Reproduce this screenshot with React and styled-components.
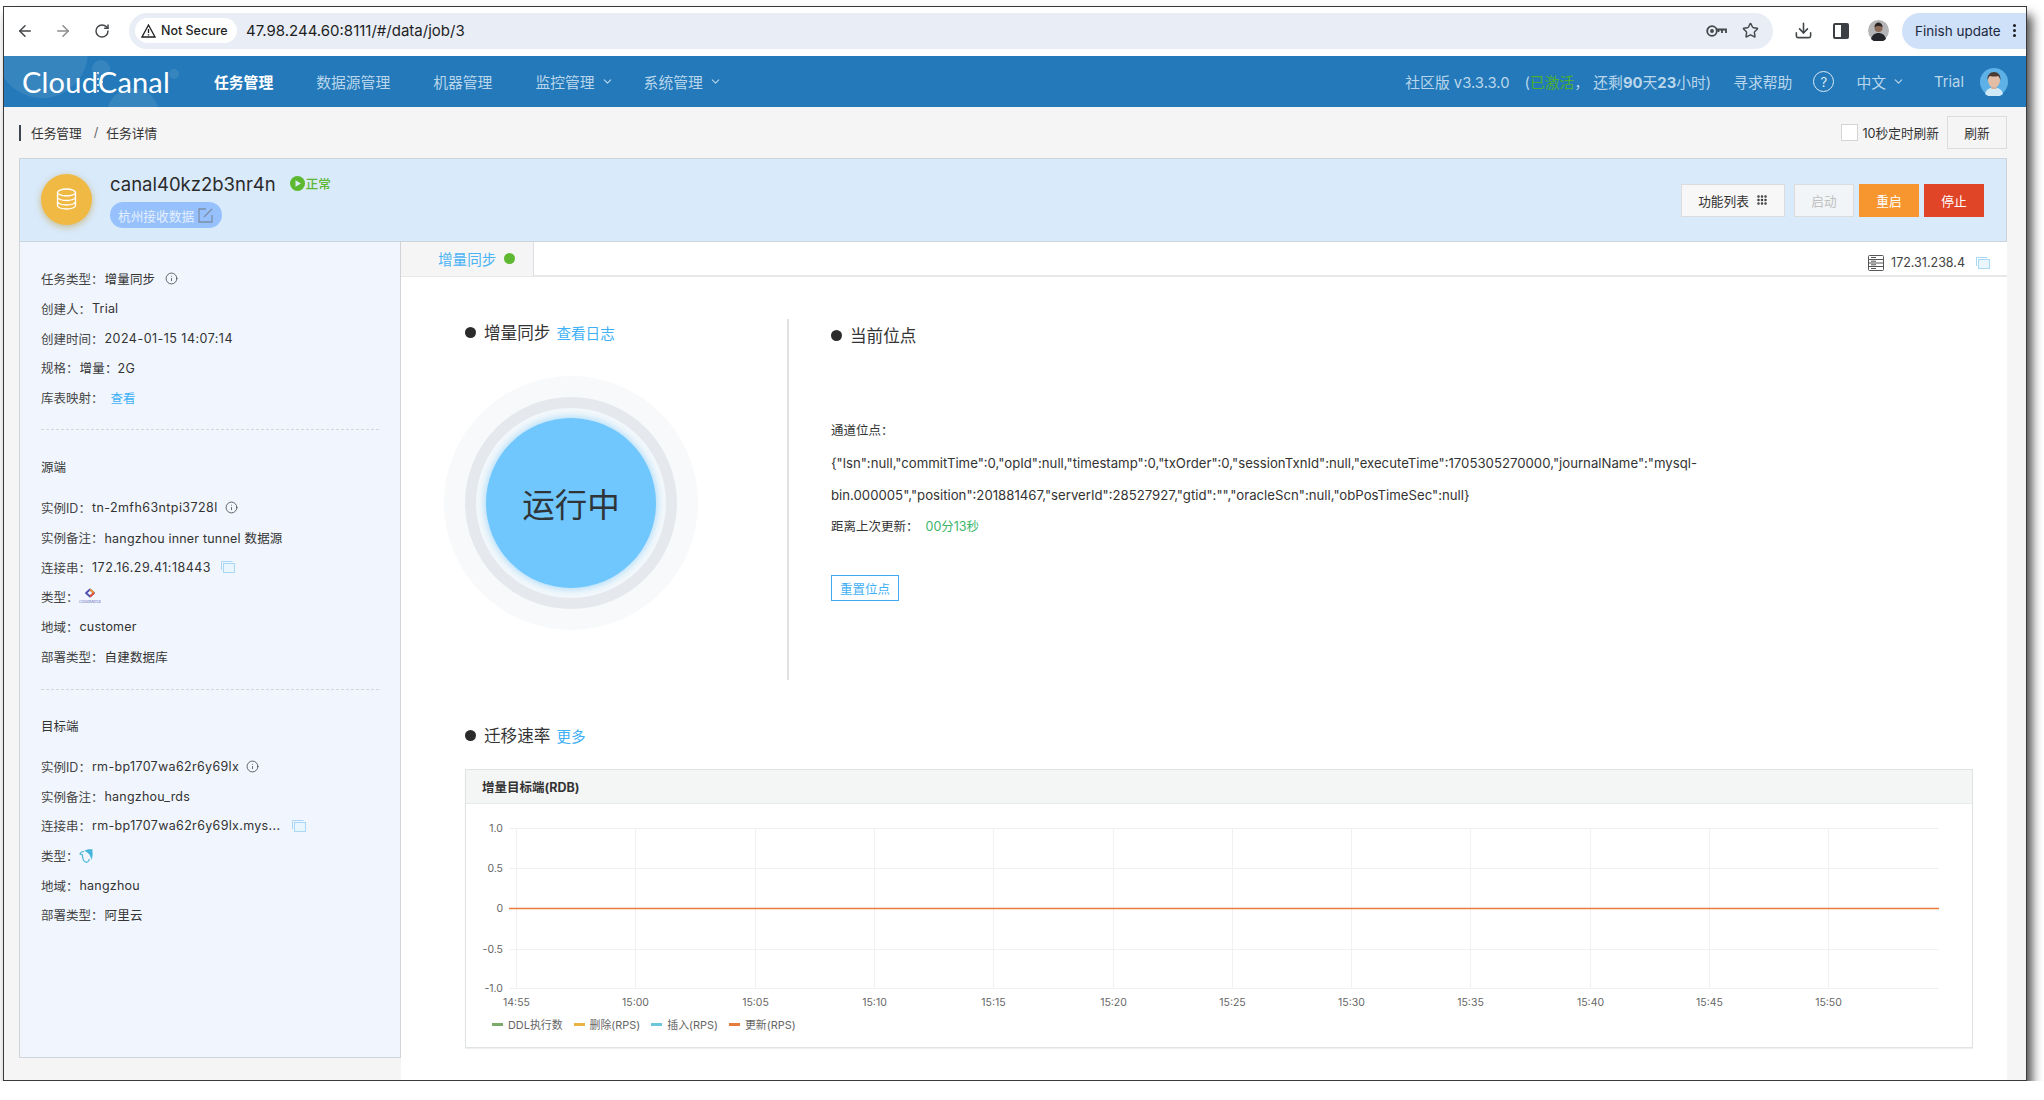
import React from 'react';
import styled, { createGlobalStyle } from 'styled-components';
import { ArrowLeft, ArrowRight, RotateCw, Star, Download, ChevronDown, Info, Grip } from 'lucide-react';

const FONT = 'Inter, "Noto Sans CJK SC", sans-serif';

const GlobalStyle = createGlobalStyle`
  html, body {
    margin: 0;
    padding: 0;
    background: #fff;
    font-family: ${FONT};
    color: #333;
  }
  * { box-sizing: border-box; }
`;

const Win = styled.div`
  margin: 6px 0 0 3px;
  width: 2024px;
  height: 1075px;
  border: 1px solid #3a3a3c;
  background: #f5f5f5;
  box-shadow: 5px 9px 10px rgba(0, 0, 0, 0.7);
  display: flex;
  flex-direction: column;
  overflow: hidden;
`;

/* browser toolbar */
const Toolbar = styled.div`
  height: 49px;
  flex: none;
  background: #fff;
  display: flex;
  align-items: center;
  padding-bottom: 2px;
  color: #45474a;
`;

const ToolIcon = styled.span`
  width: ${p => p.$w || 38}px;
  margin-left: ${p => p.$ml || 0}px;
  display: flex;
  justify-content: center;
  color: ${p => p.$color || '#44474a'};
`;

const Omnibox = styled.div`
  margin-left: 7px;
  width: 1645px;
  height: 36px;
  border-radius: 18px;
  background: #e8edf6;
  display: flex;
  align-items: center;
  padding: 0 6px;
`;

const SecurePill = styled.div`
  height: 25px;
  width: 102px;
  border-radius: 13px;
  background: #fff;
  display: flex;
  align-items: center;
  gap: 5px;
  padding-left: 6px;
  font-size: 12.5px;
  font-weight: 500;
  color: #1f1f1f;
  white-space: nowrap;
`;

const Url = styled.span`
  margin-left: 9px;
  font-size: 15px;
  color: #1f1f1f;
  flex: 1;
`;

const UpdatePill = styled.div`
  margin-left: 4px;
  width: 124px;
  height: 36px;
  border-radius: 18px 0 0 18px;
  background: #cfe0f9;
  display: flex;
  align-items: center;
  padding-left: 13px;
  font-size: 13.5px;
  color: #1b2a41;
  white-space: nowrap;
`;

const Kebab = styled.span`
  margin-left: 12px;
  width: 3px;
  height: 3px;
  border-radius: 50%;
  background: #1f1f1f;
  box-shadow: 0 -5px 0 #1f1f1f, 0 5px 0 #1f1f1f;
`;

/* product nav */
const Nav = styled.div`
  position: relative;
  height: 51px;
  flex: none;
  background: #2379b9;
  display: flex;
  align-items: center;
  color: #b9d6ec;
  font-size: 14.8px;
  white-space: nowrap;
`;

const LogoBubbles = styled.svg`
  position: absolute;
  left: 0;
  top: 0;
`;

const Logo = styled.div`
  position: relative;
  margin-left: 18px;
  width: 192px;
  font-family: Lato, sans-serif;
  font-size: 29px;
  font-weight: 400;
  letter-spacing: 0.2px;
  color: #fff;
`;

const NavItem = styled.span`
  display: inline-flex;
  align-items: center;
  gap: 6px;
  margin-right: ${p => p.$mr ?? 43}px;
  margin-left: ${p => p.$ml || 0}px;
  color: ${p => (p.$active ? '#fff' : '#b9d6ec')};
  font-weight: ${p => (p.$active ? 600 : 400)};
`;

const NavRight = styled.div`
  margin-left: auto;
  display: flex;
  align-items: center;
  padding-right: 18px;
`;

const Activated = styled.span`
  color: #4caf30;
`;

const Strong = styled.b`
  font-weight: 700;
`;

const HelpRing = styled.span`
  width: 21px;
  height: 21px;
  border: 1.5px solid #dcebf6;
  border-radius: 50%;
  display: flex;
  align-items: center;
  justify-content: center;
  font-size: 13px;
  color: #dcebf6;
  margin: 0 22px 0 21px;
`;

/* page */
const Page = styled.div`
  flex: 1;
  min-height: 0;
  display: flex;
  flex-direction: column;
  padding: 0 19px 0 15px;
`;

const Crumbs = styled.div`
  height: 51px;
  flex: none;
  display: flex;
  align-items: center;
  font-size: 12.7px;
  color: #333;
`;

const CrumbBar = styled.span`
  width: 2px;
  height: 16px;
  background: #3d4650;
  margin-right: 10px;
`;

const CrumbSep = styled.span`
  margin: 0 8px 0 12px;
  color: #666;
`;

const RefreshBox = styled.div`
  margin-left: auto;
  display: flex;
  align-items: center;
`;

const Check = styled.span`
  width: 17px;
  height: 17px;
  background: #fff;
  border: 1px solid #d4d4d4;
  margin-right: 4px;
`;

const Btn = styled.div`
  height: 33px;
  width: ${p => p.$w || 60}px;
  margin-left: ${p => p.$ml || 0}px;
  display: flex;
  align-items: center;
  justify-content: center;
  gap: 7px;
  font-size: 12.7px;
  background: ${p => p.$bg || '#f7f7f7'};
  color: ${p => p.$color || '#333'};
  border: 1px solid ${p => p.$border || '#dcdcdc'};
`;

const Head = styled.div`
  height: 84px;
  flex: none;
  background: #d9eafb;
  border: 1px solid #ccd3da;
  display: flex;
  align-items: center;
  padding: 0 22px 2px 21px;
`;

const DbBadge = styled.div`
  width: 51px;
  height: 51px;
  border-radius: 50%;
  background: #f0b944;
  box-shadow: 0 2px 7px rgba(190, 150, 40, 0.55);
  display: flex;
  align-items: center;
  justify-content: center;
  margin-right: 18px;
`;

const HeadText = styled.div`
  display: flex;
  flex-direction: column;
  gap: 5px;
`;

const NameRow = styled.div`
  display: flex;
  align-items: center;
  height: 27px;
`;

const JobName = styled.span`
  font-size: 18.5px;
  color: #2b2b2b;
  margin-right: 14px;
`;

const Health = styled.span`
  display: inline-flex;
  align-items: center;
  gap: 1px;
  color: #5cb82f;
  font-size: 12.5px;
  font-weight: 500;
`;

const Tag = styled.div`
  height: 26px;
  width: 112px;
  border-radius: 13px;
  background: #97c1fd;
  display: flex;
  align-items: center;
  gap: 4px;
  padding-left: 8px;
  font-size: 12.7px;
  color: #e4effc;
  white-space: nowrap;
`;

const HeadActions = styled.div`
  margin-left: auto;
  display: flex;
  align-items: center;
  padding-top: 2px;
`;

const Main = styled.div`
  flex: 1;
  min-height: 0;
  display: flex;
  align-items: flex-start;
`;

const Side = styled.aside`
  width: 382px;
  height: 816px;
  flex: none;
  background: #f1f6fe;
  border: 1px solid #d0d3d8;
  border-top: none;
  padding: 22px 21px 0 21px;
`;

const Row = styled.div`
  height: 29.7px;
  display: flex;
  align-items: center;
  font-size: 12.5px;
  color: #444;
  white-space: nowrap;
`;

const Val = styled.span`
  color: #333;
  letter-spacing: ${p => p.$ls || 0.2}px;
  margin-left: 1px;
`;

const SideLink = styled.span`
  color: #3fb0f5;
  margin-left: 7px;
`;

const RowIcon = styled.span`
  display: inline-flex;
  margin-left: ${p => p.$ml || 10}px;
  color: #444;
`;

const Dash = styled.div`
  border-top: 1px dashed #d4d6da;
  margin-top: ${p => p.$mt}px;
`;

const SideTitle = styled.div`
  height: 30px;
  display: flex;
  align-items: center;
  font-size: 12.5px;
  color: #333;
  margin: ${p => p.$mt}px 0 ${p => p.$mb}px;
`;

const Content = styled.section`
  flex: 1;
  align-self: stretch;
  background: #fff;
  display: flex;
  flex-direction: column;
`;

const Tabs = styled.div`
  height: 35px;
  flex: none;
  display: flex;
  align-items: center;
  border-bottom: 2px solid #e8e8e8;
  padding-right: 17px;
`;

const Tab = styled.div`
  width: 133px;
  height: 34px;
  background: #f5f5f5;
  border-right: 1px solid #dcdfe6;
  display: flex;
  align-items: center;
  gap: 8px;
  padding-left: 37px;
  font-size: 14.6px;
  color: #4ab3f4;
`;

const GreenDot = styled.span`
  width: 11px;
  height: 11px;
  border-radius: 50%;
  background: #5fb832;
`;

const Host = styled.div`
  margin-left: auto;
  padding-top: 8px;
  display: flex;
  align-items: center;
  gap: 7px;
  font-size: 12.5px;
  color: #444;
`;

const TopPart = styled.div`
  margin-top: 42px;
  height: 361px;
  flex: none;
  display: flex;
`;

const LeftCol = styled.div`
  width: 386px;
  flex: none;
`;

const RightCol = styled.div`
  flex: 1;
  border-left: 2px solid #e2e2e2;
  padding: 3px 0 0 42px;
`;

const Title = styled.div`
  height: 26px;
  display: flex;
  align-items: center;
  font-size: 16.6px;
  color: #333;
  margin-left: ${p => p.$ml || 0}px;
  margin-top: ${p => p.$mt || 0}px;
`;

const Bullet = styled.span`
  width: 11px;
  height: 11px;
  border-radius: 50%;
  background: #2b2b2b;
  margin-right: 8px;
`;

const TitleLink = styled.span`
  margin-left: 6px;
  font-size: 14.6px;
  color: #3fb0f5;
`;

const Ring = styled.div`
  width: ${p => p.$size}px;
  height: ${p => p.$size}px;
  border-radius: 50%;
  background: ${p => p.$bg};
  display: flex;
  align-items: center;
  justify-content: center;
  flex: none;
`;

const Dial = styled(Ring)`
  margin: 31px 0 0 43px;
`;

const Core = styled(Ring)`
  box-shadow: 0 0 6px 2px rgba(120, 200, 250, 0.5);
  font-size: 32.5px;
  color: #2f3438;
  padding-bottom: 2px;
`;

const Lines = styled.div`
  margin-top: 67px;
  font-size: 12.5px;
  line-height: 32px;
  color: #333;
  white-space: nowrap;
`;

const JsonLine = styled.div`
  font-size: 13.2px;
`;

const Fresh = styled.span`
  color: #3cb56b;
  margin-left: 7px;
`;

const ResetBtn = styled.div`
  margin-top: 32px;
  width: 68px;
  height: 26px;
  border: 1px solid #3fa9f5;
  display: flex;
  align-items: center;
  justify-content: center;
  font-size: 12.5px;
  color: #3fb0f5;
`;

const ChartCard = styled.div`
  margin: 21px 0 0 64px;
  width: 1508px;
  height: 279px;
  background: #fff;
  border: 1px solid #dfe3e3;
  box-shadow: 0 1px 1px rgba(0, 0, 0, 0.06);
`;

const ChartHead = styled.div`
  height: 34px;
  background: #f4f6f5;
  border-bottom: 1px solid #e8ebea;
  display: flex;
  align-items: center;
  padding-left: 16px;
  font-size: 12.5px;
  font-weight: 700;
  color: #333;
`;

const Plot = styled.svg`
  display: block;
`;

const Legend = styled.div`
  display: flex;
  align-items: center;
  height: 16px;
  margin-top: 2px;
  padding-left: 26px;
  font-size: 10.9px;
  color: #666;
`;

const LegendItem = styled.span`
  display: inline-flex;
  align-items: center;
  gap: 5px;
  margin-right: 11px;
  &::before {
    content: '';
    width: 11px;
    height: 3px;
    background: ${p => p.$color};
  }
`;

const CopyIcon = () => (
  <svg width="14" height="12" viewBox="0 0 14 12" fill="none">
    <path d="M.5 9V.5h11" stroke="#a9d8f7" />
    <rect x="2.5" y="2.5" width="11" height="9" stroke="#a9d8f7" fill="#eaf6fe" />
  </svg>
);

const ServerIcon = () => (
  <svg width="16" height="16" viewBox="0 0 16 16" fill="none" stroke="#555">
    <rect x=".5" y=".5" width="15" height="15" rx="1" />
    <path d="M1 4.5h14M1 8h14M1 11.5h14M3 2.5h5M3 6.2h5M3 9.8h5M3 13.5h5" />
  </svg>
);

const ChannelLogo = () => (
  <svg width="22" height="18" viewBox="0 0 22 18" fill="none">
    <path d="M11 1.500l4 3.500-4 3.500-4-3.500z" stroke="#4a4fb0" strokeWidth="1.800" strokeLinejoin="round" />
    <path d="M11 1.500l4 3.500" stroke="#f39a2d" strokeWidth="1.800" />
    <path d="M15 5l-4 3.500" stroke="#e8542f" strokeWidth="1.800" />
    <text x="11" y="15" fontSize="3.800" textAnchor="middle" fill="#6a70c0" fontFamily="Inter, sans-serif">CloudMerce</text>
  </svg>
);

const DolphinLogo = () => (
  <svg width="16" height="16" viewBox="0 0 16 16" fill="none">
    <path d="M5 3.5C3 3.5 1.5 4.5 1 6c1 .4 1.6.6 2.2.6L4 11c.4 2 2.6 3.6 4.5 3 1.2-.3 1.6-1.6 1.7-3" stroke="#45b4d8" strokeWidth="1.2" />
    <path d="M5 3c3-1.8 6-2 9-1.2-.8.6-.8 1-.6 1.6.6 3.2.2 6-1.2 8.6-.4-2.6-1-5-2.8-6.5C8 4 6.6 3.4 5 3z" fill="#45b4d8" />
  </svg>
);

const KeyIcon = () => (
  <svg width="21" height="14" viewBox="0 0 21 14" fill="none" stroke="#44474a" strokeWidth="1.800">
    <circle cx="6" cy="7" r="4.800" />
    <path d="M10.800 5.500H20V9M16 5.500V9M12.500 5.500V8" />
    <circle cx="6" cy="7" r="1" fill="#44474a" />
  </svg>
);

const SidePanelIcon = () => (
  <svg width="16" height="16" viewBox="0 0 16 16">
    <path d="M2 0h12a2 2 0 0 1 2 2v12a2 2 0 0 1-2 2H2a2 2 0 0 1-2-2V2a2 2 0 0 1 2-2zm0 2v12h6V2z" fill="#3c3f43" />
  </svg>
);

const ProfilePhoto = () => (
  <svg width="21" height="21" viewBox="0 0 21 21">
    <circle cx="10.5" cy="10.5" r="10.5" fill="#b5b5b7" />
    <path d="M3 19c1-4 4-6 7.5-6s6.500 2 7.500 6a10.500 10.500 0 0 1-15 0z" fill="#24262b" />
    <circle cx="10.500" cy="8" r="4" fill="#8a6a56" />
    <path d="M6.500 7c0-3 2-4.500 4-4.500s4 1.500 4 4.500c-2-1.500-6-1.500-8 0z" fill="#2a2320" />
  </svg>
);

const TrialAvatar = () => (
  <svg width="28" height="28" viewBox="0 0 28 28">
    <circle cx="14" cy="14" r="14" fill="#5eb1e6" />
    <path d="M5 26c1-5 5-6.500 9-6.500s8 1.500 9 6.500a14 14 0 0 1-18 0z" fill="#cfe9f6" />
    <rect x="11.500" y="16" width="5" height="5" fill="#d6ab93" />
    <ellipse cx="14" cy="12.500" rx="6" ry="7" fill="#e3bda6" />
    <path d="M7.500 12c-.5-5 2.500-8 6.500-8s7 3 6.500 8c-1-2.500-1.500-3.500-2.500-4-2.500.8-5.500.8-8 0-1 .5-1.500 1.500-2.500 4z" fill="#4a3b35" />
  </svg>
);

const DbIcon = () => (
  <svg width="21" height="22" viewBox="0 0 21 22" fill="none" stroke="#fff" strokeWidth="1.300">
    <ellipse cx="10.500" cy="4.500" rx="9" ry="3.500" />
    <path d="M1.500 4.500v13c0 2 4 3.500 9 3.500s9-1.500 9-3.500v-13M1.500 9c0 2 4 3.500 9 3.500s9-1.500 9-3.500M1.500 13.500c0 2 4 3.500 9 3.500s9-1.500 9-3.500" />
  </svg>
);

const PlayDot = () => (
  <svg width="15" height="15" viewBox="0 0 15 15">
    <circle cx="7.500" cy="7.500" r="7.500" fill="#5cb82f" />
    <path d="M5.500 4.200v6.600l5.500-3.300z" fill="#d9eafb" />
  </svg>
);

const EditIcon = () => (
  <svg width="15" height="15" viewBox="0 0 15 15" fill="none" stroke="#7e8ea6" strokeWidth="1.300">
    <path d="M8 1H1v13h13V7" />
    <path d="M6 9l8-8" />
  </svg>
);

const WarnIcon = () => (
  <svg width="15" height="14" viewBox="0 0 15 14" fill="none" stroke="#1f1f1f" strokeWidth="1.300">
    <path d="M7.500 1L14 13H1z" />
    <path d="M7.500 5v4M7.500 10.200v1.200" />
  </svg>
);

const ChartPlot = () => {
  const left = 43;
  const right = 1473;
  const yTicks = [
    [24, '1.0'],
    [64, '0.5'],
    [104, '0'],
    [145, '-0.5'],
    [184, '-1.0'],
  ];
  const times = ['14:55', '15:00', '15:05', '15:10', '15:15', '15:20', '15:25', '15:30', '15:35', '15:40', '15:45', '15:50'];
  return (
    <Plot width="1506" height="210" viewBox="0 0 1506 210" fontFamily={FONT} fontSize="10.500" fill="#666">
      {yTicks.map(([y, label]) => (
        <g key={label}>
          <line x1={left} x2={right} y1={y + 0.5} y2={y + 0.5} stroke="#f1f1f1" />
          <text x="37" y={y + 4} textAnchor="end">{label}</text>
        </g>
      ))}
      {times.map((t, i) => {
        const x = Math.round(50 + i * 119.3) + 0.5;
        return (
          <g key={t}>
            <line x1={x} x2={x} y1="24" y2="184" stroke="#f1f1f1" />
            <text x={x} y="202" textAnchor="middle">{t}</text>
          </g>
        );
      })}
      <line x1={left} x2={right} y1="104.500" y2="104.500" stroke="#ef7d3a" strokeWidth="1.300" />
    </Plot>
  );
};

export default function App() {
  return (
    <>
      <GlobalStyle />
      <Win>
        <Toolbar>
          <ToolIcon $ml={2}><ArrowLeft size={18} strokeWidth={2} /></ToolIcon>
          <ToolIcon $color="#8b8d90" $w={38}><ArrowRight size={18} strokeWidth={2} /></ToolIcon>
          <ToolIcon $w={40}><RotateCw size={16} strokeWidth={2.200} /></ToolIcon>
          <Omnibox>
            <SecurePill><WarnIcon /> Not Secure</SecurePill>
            <Url>47.98.244.60:8111/#/data/job/3</Url>
            <ToolIcon $w={34}><KeyIcon /></ToolIcon>
            <ToolIcon $w={34}><Star size={17} strokeWidth={2} /></ToolIcon>
          </Omnibox>
          <ToolIcon $w={40} $ml={10}><Download size={19} strokeWidth={2} /></ToolIcon>
          <ToolIcon $w={36}><SidePanelIcon /></ToolIcon>
          <ToolIcon $w={39}><ProfilePhoto /></ToolIcon>
          <UpdatePill>Finish update<Kebab /></UpdatePill>
        </Toolbar>

        <Nav>
          <LogoBubbles width="190" height="51" viewBox="0 0 190 51" fill="#fff">
            <g fillOpacity="0.09">
              <circle cx="38" cy="-4" r="46" />
              <circle cx="97" cy="13" r="9" />
              <circle cx="129" cy="58" r="26" />
              <circle cx="170" cy="18" r="5" />
            </g>
            <g>
              <circle cx="94" cy="17" r="1" />
              <circle cx="98" cy="20" r="1" />
              <circle cx="94" cy="23" r="1" />
              <circle cx="98" cy="26" r="1" />
              <circle cx="94" cy="29" r="1" />
              <circle cx="98" cy="32" r="1" />
              <circle cx="94" cy="35" r="1" />
            </g>
          </LogoBubbles>
          <Logo>CloudCanal</Logo>
          <NavItem $active>任务管理</NavItem>
          <NavItem>数据源管理</NavItem>
          <NavItem>机器管理</NavItem>
          <NavItem $mr={30}>监控管理<ChevronDown size={13} /></NavItem>
          <NavItem>系统管理<ChevronDown size={13} /></NavItem>
          <NavRight>
            <NavItem $mr={15}>社区版 v3.3.3.0</NavItem>
            <span>(<Activated>已激活</Activated>， 还剩<Strong>90</Strong>天<Strong>23</Strong>小时)</span>
            <NavItem $mr={0} $ml={22}>寻求帮助</NavItem>
            <HelpRing>?</HelpRing>
            <NavItem $mr={29}>中文<ChevronDown size={13} /></NavItem>
            <NavItem $mr={16}>Trial</NavItem>
            <TrialAvatar />
          </NavRight>
        </Nav>

        <Page>
          <Crumbs>
            <CrumbBar />
            任务管理
            <CrumbSep>/</CrumbSep>
            任务详情
            <RefreshBox>
              <Check />
              10秒定时刷新
              <Btn $ml={8} $bg="#f5f5f5">刷新</Btn>
            </RefreshBox>
          </Crumbs>

          <Head>
            <DbBadge><DbIcon /></DbBadge>
            <HeadText>
              <NameRow>
                <JobName>canal40kz2b3nr4n</JobName>
                <Health><PlayDot />正常</Health>
              </NameRow>
              <Tag>杭州接收数据<EditIcon /></Tag>
            </HeadText>
            <HeadActions>
              <Btn $w={104}>功能列表 <Grip size={12} strokeWidth={3} /></Btn>
              <Btn $w={60} $ml={9} $bg="#f2f5f8" $color="#c0c0c0">启动</Btn>
              <Btn $w={60} $ml={5} $bg="#f7952f" $border="#f7952f" $color="#fff">重启</Btn>
              <Btn $w={60} $ml={5} $bg="#e04527" $border="#e04527" $color="#fff">停止</Btn>
            </HeadActions>
          </Head>

          <Main>
            <Side>
              <Row>任务类型：<Val>增量同步</Val><RowIcon><Info size={13} strokeWidth={1.500} /></RowIcon></Row>
              <Row>创建人：<Val>Trial</Val></Row>
              <Row>创建时间：<Val $ls={0.47}>2024-01-15 14:07:14</Val></Row>
              <Row>规格：<Val>增量：2G</Val></Row>
              <Row>库表映射：<SideLink>查看</SideLink></Row>
              <Dash $mt={16.5} />
              <SideTitle $mt={22} $mb={11}>源端</SideTitle>
              <Row>实例ID：<Val $ls={0.42}>tn-2mfh63ntpi3728l</Val><RowIcon $ml={7}><Info size={13} strokeWidth={1.500} /></RowIcon></Row>
              <Row>实例备注：<Val>hangzhou inner tunnel 数据源</Val></Row>
              <Row>连接串：<Val $ls={0.49}>172.16.29.41:18443</Val><RowIcon $ml={10}><CopyIcon /></RowIcon></Row>
              <Row>类型：<ChannelLogo /></Row>
              <Row>地域：<Val>customer</Val></Row>
              <Row>部署类型：<Val>自建数据库</Val></Row>
              <Dash $mt={17.6} />
              <SideTitle $mt={21} $mb={11}>目标端</SideTitle>
              <Row>实例ID：<Val $ls={0.33}>rm-bp1707wa62r6y69lx</Val><RowIcon $ml={7}><Info size={13} strokeWidth={1.500} /></RowIcon></Row>
              <Row>实例备注：<Val>hangzhou_rds</Val></Row>
              <Row>连接串：<Val $ls={0.33}>rm-bp1707wa62r6y69lx.mys...</Val><RowIcon $ml={12}><CopyIcon /></RowIcon></Row>
              <Row>类型：<DolphinLogo /></Row>
              <Row>地域：<Val>hangzhou</Val></Row>
              <Row>部署类型：<Val>阿里云</Val></Row>
            </Side>

            <Content>
              <Tabs>
                <Tab>增量同步<GreenDot /></Tab>
                <Host><ServerIcon />172.31.238.4<RowIcon $ml={4}><CopyIcon /></RowIcon></Host>
              </Tabs>

              <TopPart>
                <LeftCol>
                  <Title $ml={64}><Bullet />增量同步<TitleLink>查看日志</TitleLink></Title>
                  <Dial $size={254} $bg="#f8f9fa">
                    <Ring $size={212} $bg="#e5e9ee">
                      <Ring $size={190} $bg="#f3f8fb">
                        <Core $size={170} $bg="#6fc7fd">运行中</Core>
                      </Ring>
                    </Ring>
                  </Dial>
                </LeftCol>
                <RightCol>
                  <Title><Bullet />当前位点</Title>
                  <Lines>
                    <div>通道位点：</div>
                    <JsonLine>{'{"lsn":null,"commitTime":0,"opId":null,"timestamp":0,"txOrder":0,"sessionTxnId":null,"executeTime":1705305270000,"journalName":"mysql-'}</JsonLine>
                    <JsonLine>{'bin.000005","position":201881467,"serverId":28527927,"gtid":"","oracleScn":null,"obPosTimeSec":null}'}</JsonLine>
                    <div>距离上次更新：<Fresh>00分13秒</Fresh></div>
                  </Lines>
                  <ResetBtn>重置位点</ResetBtn>
                </RightCol>
              </TopPart>

              <Title $ml={64} $mt={42}><Bullet />迁移速率<TitleLink>更多</TitleLink></Title>

              <ChartCard>
                <ChartHead>增量目标端(RDB)</ChartHead>
                <ChartPlot />
                <Legend>
                  <LegendItem $color="#7aab69">DDL执行数</LegendItem>
                  <LegendItem $color="#e9b343">删除(RPS)</LegendItem>
                  <LegendItem $color="#6ec6dc">插入(RPS)</LegendItem>
                  <LegendItem $color="#e77c3f">更新(RPS)</LegendItem>
                </Legend>
              </ChartCard>
            </Content>
          </Main>
        </Page>
      </Win>
    </>
  );
}
